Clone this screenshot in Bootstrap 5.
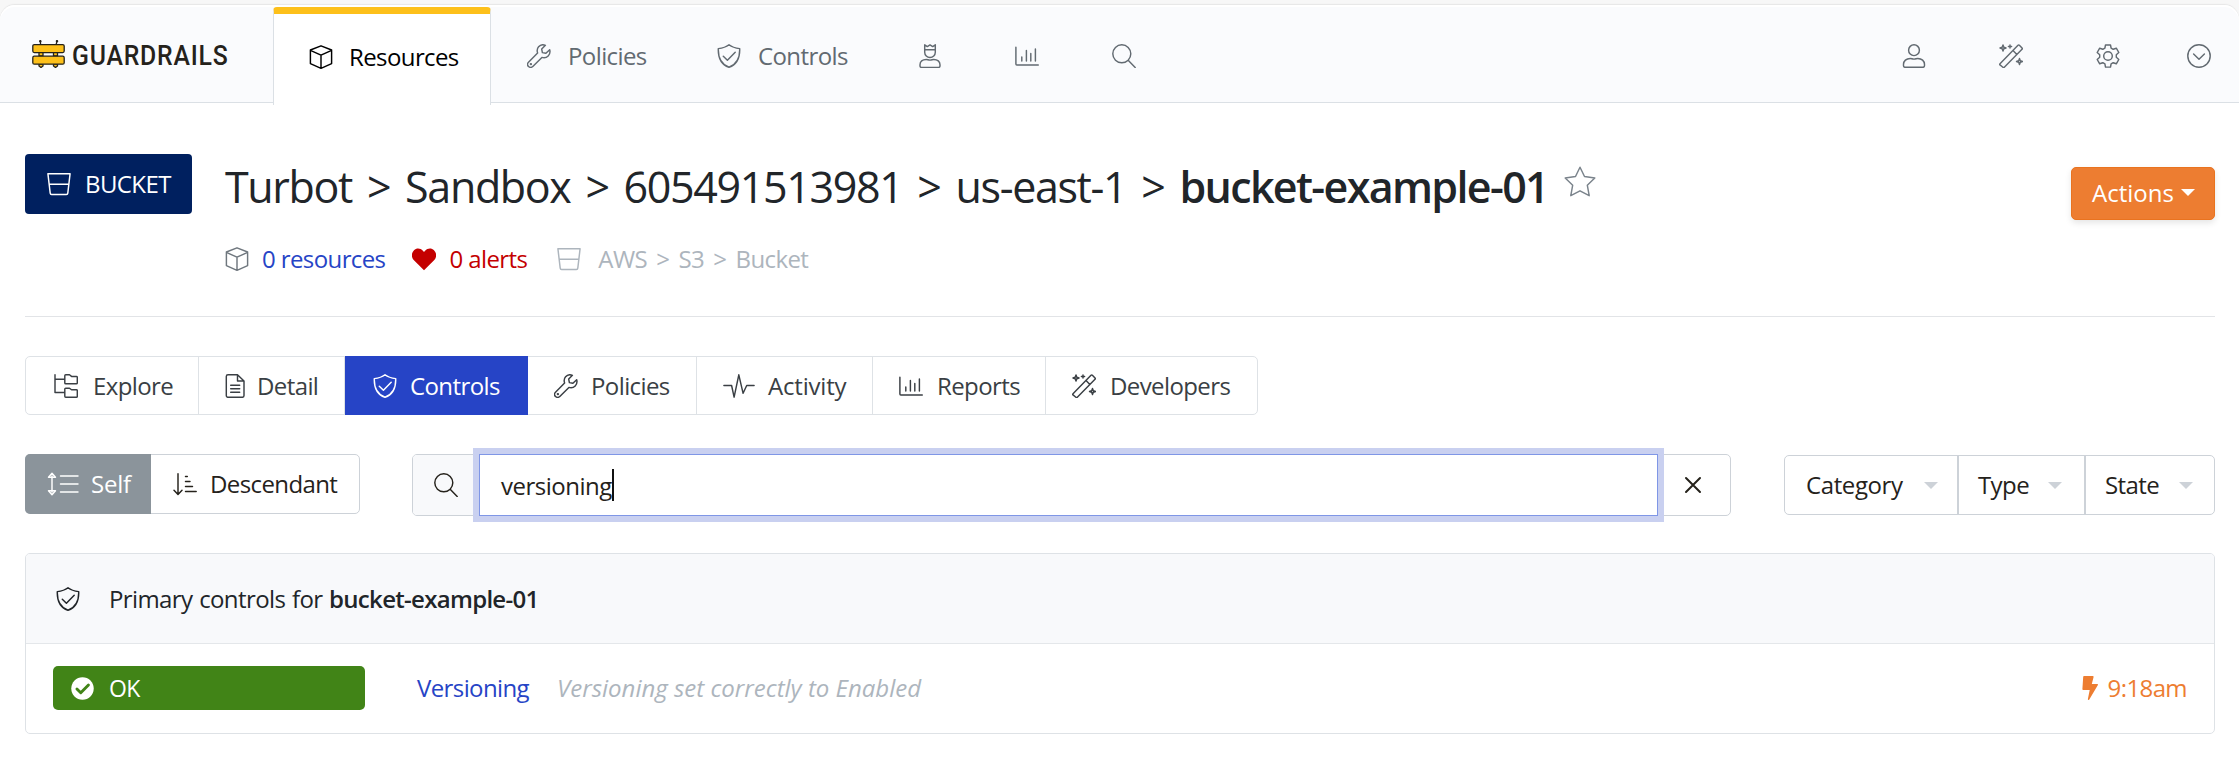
<!DOCTYPE html>
<html lang="en">
<head>
<meta charset="utf-8">
<meta name="viewport" content="width=device-width, initial-scale=1">
<title>Guardrails – bucket-example-01</title>
<link href="https://cdn.jsdelivr.net/npm/bootstrap@5.3.0/dist/css/bootstrap.min.css" rel="stylesheet">
<style>
  body { font-family: "Open Sans", "Noto Sans", sans-serif; font-size: 24px; line-height: 36px; letter-spacing: -.6px; color: #212529; background: #fff; overflow: hidden; }
  a { text-decoration: none; }
  svg.ico { width: 24px; height: 24px; flex: none; fill: none; stroke: currentColor; stroke-width: 1.45; stroke-linejoin: round; stroke-linecap: round; overflow: visible; }
  svg.wide { width: 32px; }
  svg.solid { fill: currentColor; stroke: none; }
  .t { white-space: nowrap; display: block; }

  .strip { background: #f7f7f7; height: 103px; }
  .topbar { height: 98px; background: #fafbfd; border-bottom: 1px solid #dbe0e5; border-radius: 15px 15px 0 0; box-shadow: 0 -1px 1px #e6e6e6, inset 0 2px 0 #fff; color: #626a71; }
  .brand { width: 273px; padding: 0 0 0 32px; color: #25221b; }
  .brand svg { width: 33px; height: 28px; margin-top: 1px; flex: none; }
  .word { font: 500 28px/34px Roboto, sans-serif; letter-spacing: .9px; transform: scaleX(.885); transform-origin: 0 50%; margin-left: 7px; margin-top: 4px; white-space: nowrap; }
  .tab-on { width: 218px; height: 98px; margin-top: 2px; background: #fff; border: 1px solid #dbe0e5; border-top: 7px solid #fdc01a; border-bottom: 0; border-radius: 4px 4px 0 0; color: #000; padding: 0 0 6px 35px; }
  .nav-a { color: #626a71; padding-top: 5px; }

  .main { padding: 51px 24px 0 25px; }
  .kind { width: 167px; height: 60px; background: #00205f; color: #fff; border-radius: 4px; padding-left: 22px; }
  .title { font-size: 43px; line-height: 60px; letter-spacing: -1.35px; }
  .title .w { word-spacing: 5.1px; }
  .title b { font-weight: 600; letter-spacing: -1.65px; }
  .title svg.ico { width: 32px; height: 32px; margin: 9px 0 0 16px; color: #7a838b; }
  .fw-sb { font-weight: 600; letter-spacing: -.7px; }
  .actions { width: 144px; height: 53px; background: #ed7d31; border: 1px solid #e9731f; border-radius: 5px; color: #fff; font-size: 24px; margin-top: 13px; box-shadow: 0 3px 6px rgba(0,0,0,.1); }
  .actions .t { margin: -2px 0 0 1px; }
  .tri { width: 0; height: 0; border: 7px solid transparent; border-top-color: #cdd2d8; border-bottom: 0; }
  .actions .tri { border-top-color: #fff; margin-left: 7px; margin-top: -2px; }
  .meta { margin-top: 21px; height: 36px; padding-left: 200px; }
  .blue { color: #2644c6; }
  .red { color: #c40000; }
  .gray { color: #adb5bd; }
  .rule { border-top: 1px solid #e2e4e7; margin-top: 39px; }

  .tabs { margin-top: 39px; width: 1233px; height: 59px; border: 1px solid #dee2e6; border-radius: 5px; color: #3a3f44; }
  .tabs > a { color: #3a3f44; border-right: 1px solid #dee2e6; height: 57px; flex: none; }
  .tabs > a:last-child { border-right: 0; }
  .tabs > a.on { background: #2644c6; color: #fff; height: 59px; margin: -1px 0; border: 0; }

  .filters { margin-top: 39px; height: 62px; color: #25221b; }
  .scope { width: 335px; height: 60px; border: 1px solid #cdd2d8; border-radius: 5px; }
  .scope .self { width: 126px; height: 60px; margin: -1px 0 0 -1px; border-radius: 5px 0 0 5px; background: #8b949b; color: #fff; padding-left: 22px; }
  .search { margin-left: 52px; width: 1319px; height: 62px; border: 1px solid #cdd2d8; border-radius: 5px; }
  .search .pre { width: 66px; height: 60px; background: #f8f9fb; padding-left: 21px; border-radius: 4px 0 0 4px; }
  .search .field { width: 1179px; height: 62px; margin: -1px 0; background: #fff; border: 1px solid #7f96e6; box-shadow: 0 0 0 6px #c9d0f0; padding-left: 21px; z-index: 1; letter-spacing: -.5px; }
  .search .field .t { padding-top: 2px; }
  .cursor { width: 2px; height: 32px; background: #111; }
  .pick { margin: 1px 0 0 53px; width: 431px; height: 60px; border: 1px solid #cdd2d8; border-radius: 5px; }
  .pick > div { height: 58px; padding-left: 21px; }
  .pick > div + div { border-left: 2px solid #cdd2d8; padding-left: 19px; }

  .panel { margin-top: 37px; height: 181px; border: 1px solid #dee2e6; border-radius: 5px; }
  .panel-top { height: 90px; background: #f8f9fb; border-bottom: 1px solid #e4e7ea; padding-left: 30px; border-radius: 4px 4px 0 0; }
  .panel-row { height: 88px; padding: 0 27px; }
  .ok { width: 312px; height: 44px; border-radius: 5px; background: #418417; color: #fff; padding-left: 18px; font-size: 23px; }
  .orange { color: #ed7d31; }
  .note { letter-spacing: 0; }
  .path { word-spacing: 3.5px; }
</style>
</head>
<body>
<svg width="0" height="0" class="position-absolute">
  <symbol id="cube" viewBox="0 0 24 24"><path d="M12 .8 22.6 5v13.6L12 23.3 1.4 18.6V5zM1.4 5.4 12 10.2l10.6-4.8M12 10.2v13"/></symbol>
  <symbol id="wrench" viewBox="0 0 24 24"><path d="M22.7 5.7 18.9 9.3l-3.5-.7-.7-3.5 3.7-3.8C15.900 .3 13.200 .9 11.600 2.800 10 4.700 9.900 7 10.600 9.100L1.500 18.200a3 3 0 0 0 4.300 4.300l9.100-9.100c2.300.7 4.600.2 6.300-1.500 1.700-1.700 2.100-4 1.500-6.200z"/><circle cx="3.9" cy="20.100" r=".5"/></symbol>
  <symbol id="shield" viewBox="0 0 24 24"><path d="M12 .8C9.200 3 5.200 4.200 1.300 4.600 1 13 3.500 20.200 12 23.300 20.500 20.200 23 13 22.700 4.600 18.800 4.200 14.800 3 12 .8zM6.300 12.200l4.100 4.100 7.800-8.100"/></symbol>
  <symbol id="king" viewBox="0 0 24 24"><path d="M6.700.8v7.500a5.300 5.300 0 0 0 10.600 0V.8L14.700 2.600 12 .9 9.300 2.600zM6.700 5.800h10.600M8.200 15.400C4.500 15.400 2 17.600 2 20.700v1.200c0 .9.600 1.500 1.500 1.500h17c.9 0 1.500-.6 1.500-1.500v-1.200c0-3.100-2.500-5.300-6.200-5.300-1.500 0-2 .7-3.800.7s-2.300-.7-3.800-.7z"/></symbol>
  <symbol id="bars" viewBox="0 0 24 24"><path d="M.9 3.200v16.900c0 .6.300.9.900.9h21.500M6.800 13v4M11.400 6.500V17M15.800 9.500V17M20.400 5v12"/></symbol>
  <symbol id="lens" viewBox="0 0 24 24"><circle cx="9.800" cy="9.800" r="9"/><path d="m16.400 16.400 6.800 7"/></symbol>
  <symbol id="user" viewBox="0 0 24 24"><circle cx="12" cy="6.200" r="5.400"/><path d="M8.200 14.400C4.300 14.400 1.500 17 1.500 20.300v1.500c0 .9.600 1.500 1.500 1.500h18c.9 0 1.500-.6 1.500-1.500v-1.500c0-3.300-2.800-5.900-6.700-5.900-1.500 0-2 .7-3.800.7s-2.300-.7-3.800-.7z"/></symbol>
  <symbol id="wand" viewBox="0 0 24 24"><path d="M1 19.800 19 1.200c.4-.4 1-.4 1.400 0l2.600 2.700c.4.400.4 1 0 1.400L5.300 23.200c-.4.400-1 .4-1.400 0L1 20.900c-.3-.300-.3-.800 0-1.100zM14 6.400l3.900 4.100"/><path d="m4 1 .8 2.200L7 4l-2.200.8L4 7l-.8-2.200L1 4l2.200-.8zM20.500 14.500l.8 2.200 2.200.8-2.200.8-.8 2.200-.8-2.200-2.200-.8 2.200-.8zM11 .9v3.200M9.400 2.500h3.200"/></symbol>
  <symbol id="gear" viewBox="0 0 24 24"><circle cx="12" cy="12" r="4.300"/><path d="M9.500.9h5l.6 3.200 2.100 1.200 3.100-1.100 2.500 4.300-2.500 2.200v2.600l2.500 2.200-2.500 4.300-3.100-1.100-2.100 1.200-.6 3.200h-5l-.6-3.200-2.100-1.200-3.100 1.100-2.500-4.300 2.500-2.200v-2.600L1.200 8.500l2.500-4.300 3.100 1.100 2.100-1.200z"/></symbol>
  <symbol id="down" viewBox="0 0 24 24"><circle cx="12" cy="12" r="11.200"/><path d="m6.600 10 5.400 5.200 5.400-5.200"/></symbol>
  <symbol id="pail" viewBox="0 0 24 24"><path d="M.9 1.700h22.200l-2.300 19.400c-.1.900-.6 1.300-1.400 1.300H4.600c-.8 0-1.300-.4-1.400-1.300zM2.300 12.200h19.400"/></symbol>
  <symbol id="heart" viewBox="0 0 24 24"><path d="M12 23.300 1.700 13C-.9 10.200-.7 5.700 2 3.200c2.600-2.400 6.500-2 8.900.5L12 4.900l1.100-1.200c2.400-2.500 6.300-2.900 8.900-.5 2.700 2.500 2.900 7 .3 9.800z"/></symbol>
  <symbol id="star" viewBox="0 0 32 32"><path d="m16 1.200 4.500 9.300 10.300 1.500-7.500 7.200 1.900 10.500L16 24.800l-9.200 4.900 1.900-10.500L1.200 12l10.300-1.500z"/></symbol>
  <symbol id="tree" viewBox="0 0 24 24"><path d="M1 .8v17.700h9.500M1 5.200h9.500M10.800 1.700c0-.5.300-.9.900-.9h3.800l2 1.600h4.900c.6 0 .9.300.9.900v5.600c0 .6-.3.900-.9.900H11.700c-.6 0-.9-.3-.9-.9zM10.800 15.100c0-.5.300-.9.900-.9h3.800l2 1.600h4.900c.6 0 .9.300.9.900v5.600c0 .6-.3.900-.9.900H11.700c-.6 0-.9-.3-.9-.9z"/></symbol>
  <symbol id="doc" viewBox="0 0 24 24"><path d="M5 .8h9.500L21 7v14.600c0 1-.7 1.700-1.700 1.700H5c-1 0-1.700-.7-1.700-1.700V2.500C3.300 1.500 4 .8 5 .8zM14.500.8V7H21M7.700 11.200h9M7.700 14.700h9M7.700 18.200h9"/></symbol>
  <symbol id="pulse" viewBox="0 0 32 24"><path d="M.9 11.500h7.700l2.500 11.700L15.800.8l4.300 18.500 3.600-7.800h7.400"/></symbol>
  <symbol id="height" viewBox="0 0 32 24"><path d="M5 4v16M1.500 5.200 5 1.300l3.500 3.900zM1.500 18.800 5 22.700l3.500-3.900zM13.500 4h17.500M13.500 12h17.500M13.500 20h17.500"/></symbol>
  <symbol id="sort" viewBox="0 0 24 24"><path d="M5 1.800v20.500M1 18.300l4 4.200 4-4.200M12.500 4.500h1.800M12.500 9.500h4.500M12.500 14.500h7M12.500 19.500h10.700"/></symbol>
  <symbol id="cross" viewBox="0 0 24 24"><path d="m5 5 14 14M19 5 5 19"/></symbol>
  <symbol id="tick" viewBox="0 0 24 24"><circle cx="12" cy="12" r="11.700"/><path d="m6.200 12.500 4 4 8-8.200" fill="none" stroke="#418417" stroke-width="3"/></symbol>
  <symbol id="bolt" viewBox="0 0 24 24"><path d="M5 0h8.800c.6 0 .9.400.8.900L12.800 8h5.500c.6 0 .9.600.6 1.100L10.300 23.600c-.5.800-1.600.4-1.400-.5L10.700 14H4.200c-.5 0-.8-.4-.8-.8L4.200.7C4.200.300 4.600 0 5 0z"/></symbol>
</svg>

<div class="strip d-flex flex-column justify-content-end">
  <header class="topbar d-flex">
    <a class="brand d-flex align-items-center" href="#">
      <svg viewBox="0 0 33 28"><g stroke="#25221b" stroke-width="1.300"><path d="M8.500 5V1.200M24 5l1-3.800" fill="none"/><circle cx="8.300" cy="1.200" r=".6"/><circle cx="25" cy="1.200" r=".6"/><path fill="#fdc01a" d="M7 12h4v4H7zM21.500 12h4v4h-4zM7 24h4v2l-2 1.500L7 26zM21.500 24h4v2l-2 1.500-2-1.500z"/><rect x=".8" y="4.600" width="31.400" height="8" rx="1.500" fill="#fdc01a"/><rect x=".8" y="16.200" width="31.400" height="8" rx="1.500" fill="#fdc01a"/></g></svg>
      <span class="word">GUARDRAILS</span>
    </a>
    <a class="tab-on d-flex align-items-center" href="#"><svg class="ico"><use href="#cube"/></svg><span class="t" style="margin-left:16px">Resources</span></a>
    <a class="nav-a d-flex align-items-center" href="#" style="margin-left:36px"><svg class="ico"><use href="#wrench"/></svg><span class="t" style="margin-left:17px;width:147px">Policies</span></a>
    <a class="nav-a d-flex align-items-center" href="#" style="margin-left:2px"><svg class="ico"><use href="#shield"/></svg><span class="t" style="margin-left:17px;width:160px">Controls</span></a>
    <a class="nav-a d-flex align-items-center" href="#"><svg class="ico"><use href="#king"/></svg></a>
    <a class="nav-a d-flex align-items-center" href="#" style="margin-left:73px"><svg class="ico"><use href="#bars"/></svg></a>
    <a class="nav-a d-flex align-items-center" href="#" style="margin-left:73px"><svg class="ico"><use href="#lens"/></svg></a>
    <div class="ms-auto d-flex" style="padding-right:28px;gap:73px">
      <a class="nav-a d-flex align-items-center" href="#"><svg class="ico"><use href="#user"/></svg></a>
      <a class="nav-a d-flex align-items-center" href="#"><svg class="ico"><use href="#wand"/></svg></a>
      <a class="nav-a d-flex align-items-center" href="#"><svg class="ico"><use href="#gear"/></svg></a>
      <a class="nav-a d-flex align-items-center" href="#" style="margin-left:-6px"><svg class="ico"><use href="#down"/></svg></a>
    </div>
  </header>
</div>

<main class="main">
  <div class="d-flex">
    <div class="kind d-flex align-items-center"><svg class="ico"><use href="#pail"/></svg><span class="t" style="margin-left:14px">BUCKET</span></div>
    <div class="title d-flex" style="margin-left:33px;padding-top:3px">
      <span class="w t">Turbot &gt; Sandbox &gt; 605491513981 &gt; us-east-1 &gt; <b>bucket-example-01</b></span>
      <svg class="ico"><use href="#star"/></svg>
    </div>
    <button type="button" class="btn p-0 actions ms-auto d-flex align-items-center justify-content-center"><span class="t">Actions</span><i class="tri"></i></button>
  </div>
  <div class="meta d-flex align-items-center">
    <svg class="ico" style="color:#6f777e"><use href="#cube"/></svg><a class="t blue" href="#" style="margin-left:13px">0 resources</a>
    <svg class="ico solid red" style="margin-left:27px"><use href="#heart"/></svg><a class="t red" href="#" style="margin-left:13px">0 alerts</a>
    <svg class="ico gray" style="margin-left:30px"><use href="#pail"/></svg><span class="t gray path" style="margin-left:17px">AWS &gt; S3 &gt; Bucket</span>
  </div>
  <div class="rule"></div>

  <nav class="tabs d-flex">
    <a class="d-flex align-items-center" href="#" style="width:173px;padding-left:28px"><svg class="ico"><use href="#tree"/></svg><span class="t" style="margin-left:15px">Explore</span></a>
    <a class="d-flex align-items-center" href="#" style="width:146px;padding-left:24px"><svg class="ico"><use href="#doc"/></svg><span class="t" style="margin-left:10px">Detail</span></a>
    <a class="on d-flex align-items-center" href="#" style="width:183px;padding-left:28px"><svg class="ico"><use href="#shield"/></svg><span class="t" style="margin-left:13px">Controls</span></a>
    <a class="d-flex align-items-center" href="#" style="width:169px;padding-left:26px"><svg class="ico"><use href="#wrench"/></svg><span class="t" style="margin-left:13px">Policies</span></a>
    <a class="d-flex align-items-center" href="#" style="width:176px;padding-left:26px"><svg class="ico wide"><use href="#pulse"/></svg><span class="t" style="margin-left:13px;letter-spacing:-.2px">Activity</span></a>
    <a class="d-flex align-items-center" href="#" style="width:173px;padding-left:26px"><svg class="ico"><use href="#bars"/></svg><span class="t" style="margin-left:14px">Reports</span></a>
    <a class="d-flex align-items-center" href="#" style="padding-left:26px"><svg class="ico"><use href="#wand"/></svg><span class="t" style="margin-left:14px">Developers</span></a>
  </nav>

  <div class="filters d-flex">
    <div class="scope d-flex">
      <div class="self d-flex align-items-center"><svg class="ico wide"><use href="#height"/></svg><span class="t" style="margin-left:12px;letter-spacing:-.2px">Self</span></div>
      <div class="d-flex align-items-center" style="padding-left:22px"><svg class="ico"><use href="#sort"/></svg><span class="t" style="margin-left:13px">Descendant</span></div>
    </div>
    <div class="search d-flex">
      <div class="pre d-flex align-items-center"><svg class="ico"><use href="#lens"/></svg></div>
      <div class="field d-flex align-items-center"><span class="t">versioning</span><i class="cursor"></i></div>
      <div class="d-flex align-items-center" style="padding-left:23px"><svg class="ico" style="stroke-width:2"><use href="#cross"/></svg></div>
    </div>
    <div class="pick d-flex">
      <div class="d-flex align-items-center" style="width:172px"><span class="t" style="width:118px;letter-spacing:-.4px">Category</span><i class="tri"></i></div>
      <div class="d-flex align-items-center" style="width:127px"><span class="t" style="width:70px">Type</span><i class="tri"></i></div>
      <div class="d-flex align-items-center"><span class="t" style="width:74px">State</span><i class="tri"></i></div>
    </div>
  </div>

  <section class="panel">
    <div class="panel-top d-flex align-items-center"><svg class="ico"><use href="#shield"/></svg><span class="t" style="margin-left:29px;word-spacing:1px">Primary controls for <b class="fw-sb">bucket-example-01</b></span></div>
    <div class="panel-row d-flex align-items-center">
      <div class="ok d-flex align-items-center"><svg class="ico solid" style="width:23px;height:23px"><use href="#tick"/></svg><span class="t" style="margin-left:15px">OK</span></div>
      <a class="t blue" href="#" style="margin-left:52px">Versioning</a>
      <span class="t gray fst-italic note" style="margin-left:28px">Versioning set correctly to Enabled</span>
      <div class="ms-auto d-flex align-items-center orange"><svg class="ico solid"><use href="#bolt"/></svg><span class="t" style="margin-left:5px">9:18am</span></div>
    </div>
  </section>
</main>
<script src="https://cdn.jsdelivr.net/npm/bootstrap@5.3.0/dist/js/bootstrap.bundle.min.js"></script>
</body>
</html>
